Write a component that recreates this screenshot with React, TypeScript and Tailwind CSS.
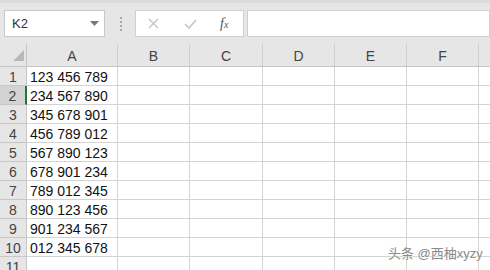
import React from "react";

const cols = [
  { name: "A", w: "w-[91px]" },
  { name: "B", w: "w-[72px]" },
  { name: "C", w: "w-[73px]" },
  { name: "D", w: "w-[72px]" },
  { name: "E", w: "w-[72px]" },
  { name: "F", w: "w-[72px]" },
  { name: "", w: "w-[40px]" },
];

const values = [
  "123 456 789",
  "234 567 890",
  "345 678 901",
  "456 789 012",
  "567 890 123",
  "678 901 234",
  "789 012 345",
  "890 123 456",
  "901 234 567",
  "012 345 678",
  "",
];

export default function App() {
  return (
    <div
      className="relative w-[490px] h-[270px] overflow-hidden bg-white text-[#222]"
      style={{ fontFamily: '"Liberation Sans", "Noto Sans CJK SC", sans-serif' }}
    >
      {/* formula bar */}
      <div className="h-[44px] bg-[#e6e6e6] border-t-[3px] border-[#dcdcdc] flex items-center">
        <div className="ml-[4px] w-[101px] h-[27px] bg-white border border-[#c8c8c8] flex items-center justify-between pl-[7px] pr-[5px]">
          <span className="text-[13px] text-[#333]">K2</span>
          <svg width="9" height="5" viewBox="0 0 9 5">
            <path d="M0 0 L9 0 L4.5 5 Z" fill="#777" />
          </svg>
        </div>
        <div className="ml-[15px] flex flex-col gap-[2px]">
          <div className="w-[2px] h-[2px] bg-[#a8a8a8]" />
          <div className="w-[2px] h-[2px] bg-[#a8a8a8]" />
          <div className="w-[2px] h-[2px] bg-[#a8a8a8]" />
          <div className="w-[2px] h-[2px] bg-[#a8a8a8]" />
        </div>
        <div className="ml-[13px] w-[109px] h-[27px] bg-white border border-[#d0d0d0] flex items-center">
          <svg className="ml-[12px]" width="11" height="11" viewBox="0 0 11 11">
            <path d="M1 1 L10 10 M10 1 L1 10" stroke="#c4c4c4" strokeWidth="1.4" />
          </svg>
          <svg className="ml-[25px]" width="13" height="10" viewBox="0 0 13 10">
            <path d="M1 5 L5 9 L12 1" stroke="#c4c4c4" strokeWidth="1.6" fill="none" />
          </svg>
          <span
            className="ml-[23px] text-[14px] italic text-[#555]"
            style={{ fontFamily: '"Liberation Serif", serif' }}
          >
            f<span className="text-[10px]">x</span>
          </span>
        </div>
        <div className="ml-[3px] flex-1 h-[27px] bg-white border border-[#d0d0d0]" />
      </div>

      {/* column headers */}
      <div className="flex h-[23px] bg-[#e6e6e6] border-b border-[#c6c6c6]">
        <div className="w-[27px] shrink-0 border-r border-[#c6c6c6] relative">
          <svg className="absolute left-[13px] top-[6px]" width="11" height="11" viewBox="0 0 11 11">
            <path d="M11 0 L11 11 L0 11 Z" fill="#b8b8b8" />
          </svg>
        </div>
        {cols.map((c, i) => (
          <div
            key={i}
            className={`${c.w} shrink-0 border-r border-[#d0d0d0] flex items-center justify-center pt-[2px] text-[14px] text-[#444]`}
          >
            {c.name}
          </div>
        ))}
      </div>

      {/* rows */}
      {values.map((v, r) => (
        <div key={r} className="flex h-[19px]">
          <div
            className={`w-[27px] shrink-0 border-b border-r flex items-center justify-center pt-[3px] text-[14px] ${
              r === 1 ? "bg-[#d2d2d2] border-r-[#217346] border-r-2 text-[#444] border-b-[#c6c6c6]" : "bg-[#e6e6e6] border-[#c6c6c6] text-[#444]"
            }`}
          >
            {r + 1}
          </div>
          {cols.map((c, i) => (
            <div
              key={i}
              className={`${c.w} shrink-0 border-r border-b border-[#d4d4d4] flex items-center text-[14px] text-[#111] pl-[3px] pt-[3px] whitespace-nowrap`}
            >
              {i === 0 ? v : ""}
            </div>
          ))}
        </div>
      ))}

      {/* watermark */}
      <div
        className="absolute left-[388px] top-[244px] text-[13px] text-[#8a8a8a] whitespace-nowrap"
        style={{ textShadow: "0 0 2px #fff, 0 0 2px #fff" }}
      >
        头条 @西柚xyzy
      </div>
    </div>
  );
}
